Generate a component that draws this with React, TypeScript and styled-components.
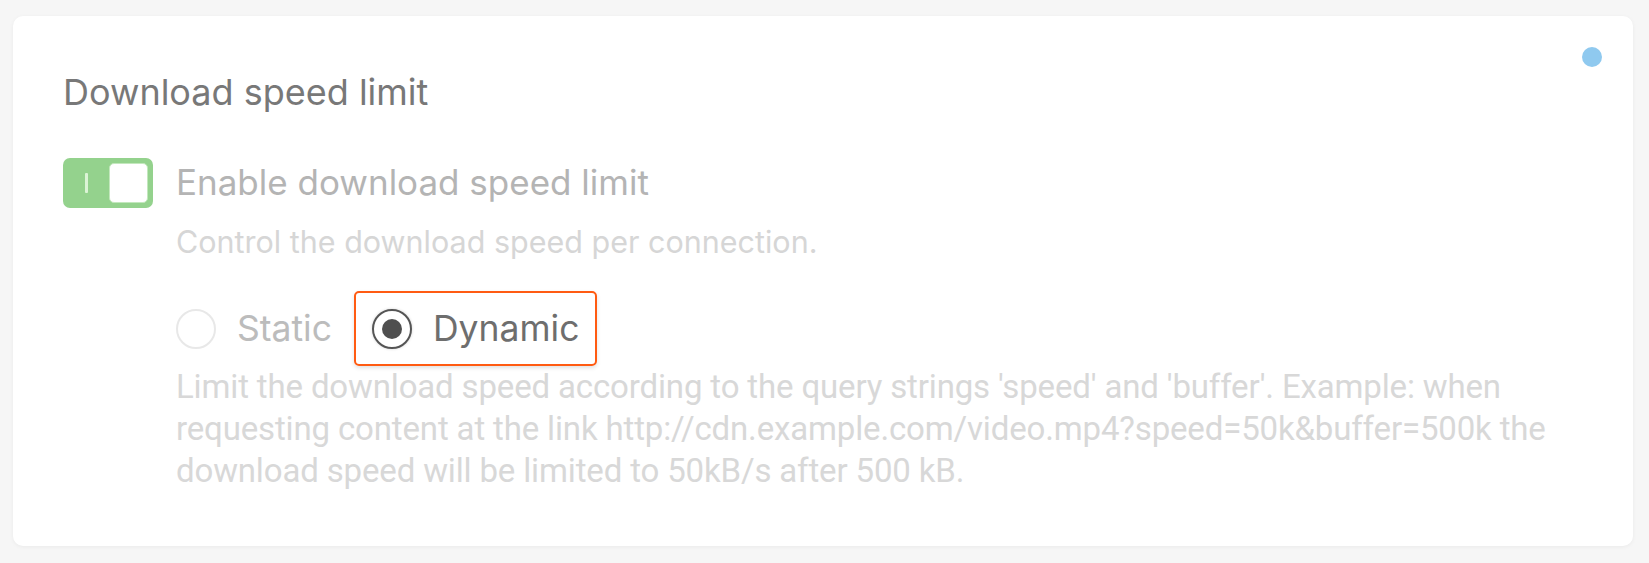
import React, { useState } from 'react';
import styled, { createGlobalStyle } from 'styled-components';

const GlobalStyle = createGlobalStyle`
  html, body {
    margin: 0;
    padding: 0;
    background: #f6f6f6;
  }
  body {
    font-family: Inter, "Liberation Sans", sans-serif;
  }
`;

const Page = styled.div`
  width: 1649px;
  height: 563px;
  box-sizing: border-box;
  padding: 16px 16px 17px 13px;
  background: #f6f6f6;
`;

const Card = styled.section`
  position: relative;
  height: 100%;
  box-sizing: border-box;
  background: #ffffff;
  border-radius: 10px;
  box-shadow: 0 1px 4px rgba(0, 0, 0, 0.05);
  padding: 55px 50px 0 50px;
`;

const StatusDot = styled.span`
  position: absolute;
  top: 31px;
  right: 31px;
  width: 20px;
  height: 20px;
  border-radius: 50%;
  background: #8fc9ef;
`;

const Title = styled.h2`
  margin: 0;
  font-size: 36px;
  line-height: 42px;
  font-weight: 400;
  color: #787878;
`;

const SwitchRow = styled.div`
  display: flex;
  gap: 23px;
  margin-top: 45px;
`;

const Toggle = styled.button<{ on: boolean }>`
  position: relative;
  flex: none;
  width: 90px;
  height: 50px;
  padding: 0;
  border: none;
  border-radius: 7px;
  background: ${({ on }) => (on ? '#94d28d' : '#dddddd')};
  cursor: pointer;

  &::before {
    content: '';
    position: absolute;
    left: 22px;
    top: 15px;
    width: 3px;
    height: 20px;
    border-radius: 1px;
    background: #dcf4d6;
  }
`;

const Knob = styled.span<{ on: boolean }>`
  position: absolute;
  top: 5px;
  left: ${({ on }) => (on ? '46px' : '5px')};
  width: 39px;
  height: 40px;
  box-sizing: border-box;
  border-radius: 5px;
  background: #ffffff;
  border: 1px solid #c3e8bd;
`;

const SwitchText = styled.div`
  display: flex;
  flex-direction: column;
  padding-top: 3px;
`;

const SwitchLabel = styled.div`
  font-size: 35px;
  line-height: 42px;
  color: #b4b4b4;
`;

const Hint = styled.div`
  margin-top: 21px;
  font-size: 30.5px;
  line-height: 36px;
  color: #d6d6d6;
`;

const RadioGroup = styled.div`
  display: flex;
  align-items: center;
  gap: 22px;
  margin-top: 31px;
`;

const RadioOption = styled.label<{ focused?: boolean }>`
  display: flex;
  align-items: center;
  gap: 21px;
  height: 75px;
  box-sizing: border-box;
  padding: ${({ focused }) => (focused ? '0 16px 0 16px' : '0')};
  border: ${({ focused }) => (focused ? '2px solid #ff5b12' : 'none')};
  border-radius: 5px;
  box-shadow: ${({ focused }) => (focused ? '0 2px 4px rgba(0,0,0,0.12)' : 'none')};
  cursor: pointer;
`;

const RadioCircle = styled.span<{ checked: boolean }>`
  position: relative;
  flex: none;
  width: 40px;
  height: 40px;
  box-sizing: border-box;
  border-radius: 50%;
  border: ${({ checked }) => (checked ? '2px solid #555555' : '2px solid #e8e8e8')};
  background: #ffffff;
  box-shadow: ${({ checked }) => (checked ? '0 0 3px rgba(0,0,0,0.18)' : 'none')};

  &::after {
    content: '';
    display: ${({ checked }) => (checked ? 'block' : 'none')};
    position: absolute;
    top: 50%;
    left: 50%;
    width: 20px;
    height: 20px;
    margin: -10px 0 0 -10px;
    border-radius: 50%;
    background: #4f4f4f;
  }
`;

const RadioText = styled.span<{ checked: boolean }>`
  font-size: 35.5px;
  line-height: 42px;
  color: ${({ checked }) => (checked ? '#6e6e6e' : '#bcbcbc')};
`;

const Description = styled.p`
  margin: 0;
  font-family: Roboto, "Liberation Sans", sans-serif;
  font-size: 33px;
  letter-spacing: -0.15px;
  line-height: 42px;
  color: #d8d8d8;
`;

export default function App() {
  const [enabled, setEnabled] = useState(true);
  const [mode, setMode] = useState<'static' | 'dynamic'>('dynamic');

  return (
    <>
      <GlobalStyle />
      <Page>
        <Card>
          <StatusDot />
          <Title>Download speed limit</Title>
          <SwitchRow>
            <Toggle on={enabled} onClick={() => setEnabled(!enabled)}>
              <Knob on={enabled} />
            </Toggle>
            <SwitchText>
              <SwitchLabel>Enable download speed limit</SwitchLabel>
              <Hint>Control the download speed per connection.</Hint>
              <RadioGroup>
                <RadioOption onClick={() => setMode('static')}>
                  <RadioCircle checked={mode === 'static'} />
                  <RadioText checked={mode === 'static'}>Static</RadioText>
                </RadioOption>
                <RadioOption focused onClick={() => setMode('dynamic')}>
                  <RadioCircle checked={mode === 'dynamic'} />
                  <RadioText checked={mode === 'dynamic'}>Dynamic</RadioText>
                </RadioOption>
              </RadioGroup>
              <Description>
                Limit the download speed according to the query strings 'speed' and 'buffer'. Example: when
                <br />
                requesting content at the link http://cdn.example.com/video.mp4?speed=50k&amp;buffer=500k the
                <br />
                download speed will be limited to 50kB/s after 500 kB.
              </Description>
            </SwitchText>
          </SwitchRow>
        </Card>
      </Page>
    </>
  );
}
